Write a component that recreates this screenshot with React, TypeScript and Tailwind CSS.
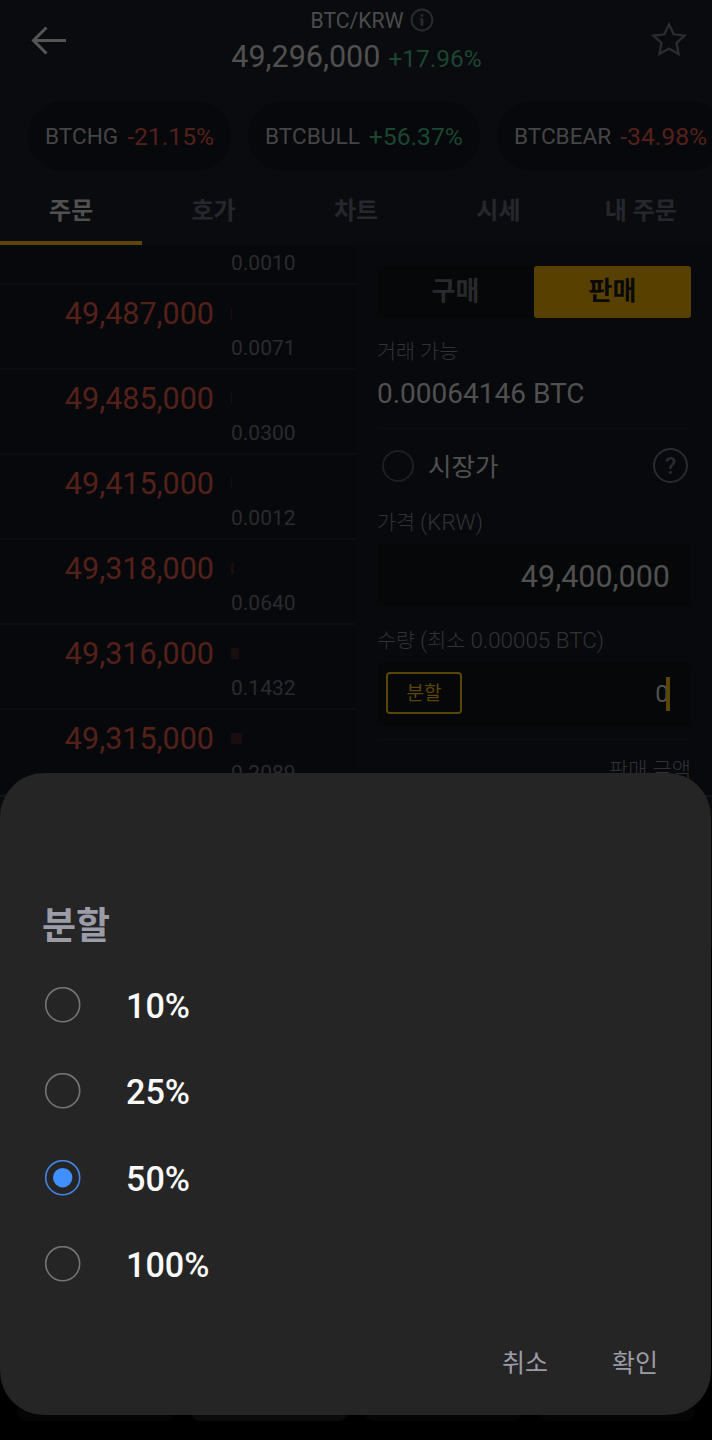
import React, { useState } from "react";

const tickers = [
  { name: "BTCHG", change: "-21.15%", up: false },
  { name: "BTCBULL", change: "+56.37%", up: true },
  { name: "BTCBEAR", change: "-34.98%", up: false },
];

const tabs = ["주문", "호가", "차트", "시세", "내 주문"];

const asks = [
  { price: "49,487,000", amount: "0.0071", bar: 1 },
  { price: "49,485,000", amount: "0.0300", bar: 1 },
  { price: "49,415,000", amount: "0.0012", bar: 1 },
  { price: "49,318,000", amount: "0.0640", bar: 3 },
  { price: "49,316,000", amount: "0.1432", bar: 8 },
  { price: "49,315,000", amount: "0.2089", bar: 11 },
];

const options = ["10%", "25%", "50%", "100%"];

const Header: React.FC = () => (
  <header className="flex h-[101px] shrink-0 items-start justify-between pl-[30px] pr-[25px]">
    <svg className="mt-[25px] h-[32px] w-[37px]" viewBox="0 0 37 32" fill="none" stroke="#555555" strokeWidth="3">
      <path d="M36 15.5H4M16.5 2.5L3.5 15.5L16.5 28.5" />
    </svg>
    <div className="mr-[5px] flex w-[252px] flex-col items-center">
      <div className="flex h-[40px] items-center gap-[7px] pl-[32px]">
        <span className="pt-px text-[21.2px] leading-[40px] text-[#4b4b4d]">BTC/KRW</span>
        <svg className="h-[24px] w-[24px]" viewBox="0 0 24 24" fill="none" stroke="#2a2b2f" strokeWidth="2">
          <circle cx="12" cy="12" r="10.4" />
          <path d="M12 6.2v2.6M12 10.4v7.4" strokeWidth="2.6" />
          <path d="M9.5 11.2h2.5" strokeWidth="1.6" />
        </svg>
      </div>
      <div className="flex h-[32px] items-baseline gap-[8px] whitespace-nowrap leading-[33px]">
        <span className="text-[30.5px] text-[#505050]">49,296,000</span>
        <span className="text-[24.5px] text-[#1b4630]">+17.96%</span>
      </div>
    </div>
    <svg className="mt-[21px] h-[36px] w-[36px]" viewBox="0 0 36 36" fill="none" stroke="#2b2c30" strokeWidth="2.3">
      <path d="M18 3.2L22.6 13.3L33.6 14.6L25.5 22L27.6 33L18 27.6L8.4 33L10.5 22L2.4 14.6L13.4 13.3Z" />
    </svg>
  </header>
);

const OrderBook: React.FC = () => (
  <section className="w-[356px] shrink-0 bg-[#07080b]">
    <div className="flex h-[40px] border-b-2 border-[#0c0d11] pl-[231px]">
      <span className="text-[21px] leading-[37px] text-[#2a2b2f]">0.0010</span>
    </div>
    {asks.map((row) => (
      <div key={row.price} className="flex h-[85px] gap-[17px] border-b-2 border-[#0c0d11]">
        <span className="w-[214px] pt-[9px] text-right text-[30.5px] leading-[40px] text-[#54211a]">
          {row.price}
        </span>
        <div className="flex flex-col">
          <div className="mt-[23px] h-[11px] bg-[#1a0d0d]" style={{ width: row.bar }} />
          <span className="mt-[13px] text-[21px] leading-[32px] text-[#2a2b2f]">{row.amount}</span>
        </div>
      </div>
    ))}
  </section>
);

const OrderForm: React.FC = () => (
  <section className="flex flex-1 flex-col bg-[#08090d] pl-[21px] pr-[21px] pt-[21px]">
    <div className="flex h-[52px] shrink-0 rounded-[3px] bg-[#060708] text-[26px] font-bold leading-[50px]">
      <button className="w-[157px] pb-[2px] text-[#292a2e]">구매</button>
      <button className="flex-1 rounded-[3px] bg-[#584100] pb-[2px] text-[#0a0a0b]">판매</button>
    </div>
    <span className="mt-[18px] text-[20.7px] font-light leading-[32px] text-[#313236]">거래 가능</span>
    <span className="mt-[10px] text-[28px] leading-[32px] text-[#505050]">0.00064146 BTC</span>
    <div className="mt-[18px] h-[1px] shrink-0 bg-[#0d0e12]" />
    <div className="flex h-[73px] shrink-0 items-center pl-[5px] pr-[3px]">
      <span className="h-[32px] w-[32px] rounded-full border-[2px] border-[#1d1e22]" />
      <span className="ml-[14px] flex-1 pt-[2px] text-[25.5px] leading-[72px] text-[#505050]">시장가</span>
      <span className="flex h-[35px] w-[35px] items-center justify-center rounded-full border-[2px] border-[#2a2b2f] pt-px text-[23px] font-medium leading-none text-[#2a2b2f]">
        ?
      </span>
    </div>
    <span className="mt-[4px] h-[32px] text-[20.7px] font-light leading-[32px] text-[#313236]">
      가격 <span className="text-[22.4px]">(KRW)</span>
    </span>
    <div className="mt-[6px] h-[62px] shrink-0 rounded-[3px] bg-[#060708] pr-[21px] text-right text-[30.5px] leading-[66px] text-[#505050]">
      49,400,000
    </div>
    <span className="mt-[18px] h-[32px] text-[20.7px] font-light leading-[32px] text-[#313236]">
      수량 <span className="text-[22.4px]">(</span>최소 <span className="text-[22.4px]">0.00005 BTC)</span>
    </span>
    <div className="mt-[6px] flex h-[64px] shrink-0 items-center justify-between rounded-[3px] bg-[#060708] pl-[9px] pr-[21px]">
      <button className="mb-[2px] h-[42px] w-[76px] rounded-[4px] border-2 border-[#5b4509] text-[19px] leading-[37px] text-[#5b4509]">
        분할
      </button>
      <div className="mb-px flex items-center">
        <span className="pt-px text-[24.5px] leading-[60px] text-[#505050]">0</span>
        <span className="-ml-[3px] h-[34px] w-[4px] bg-[#5b4509]" />
      </div>
    </div>
    <div className="mt-[13px] h-[1px] shrink-0 bg-[#0d0e12]" />
    <span className="mt-[14px] text-right text-[20.9px] font-light leading-[32px] text-[#313236]">판매 금액</span>
  </section>
);

const Radio: React.FC<{ checked: boolean }> = ({ checked }) => (
  <svg className="h-[36px] w-[36px]" viewBox="0 0 36 36" fill="none">
    <circle cx="17.7" cy="17.7" r="17" stroke={checked ? "#4285e0" : "#747474"} strokeWidth="1.6" />
    {checked && <circle cx="17.7" cy="17.7" r="9.7" fill="#4090ff" />}
  </svg>
);

const SplitDialog: React.FC = () => {
  const [selected, setSelected] = useState("50%");

  return (
    <div className="absolute left-0 top-[773px] flex h-[642px] w-[711px] flex-col rounded-[44px] bg-[#252525]" role="dialog">
      <h2 className="mt-[129px] pl-[42px] text-[37px] font-bold leading-[50px] text-[#9b9ca7]">분할</h2>
      <div className="mt-[10px] flex flex-col">
        {options.map((option) => (
          <button
            key={option}
            className="flex h-[86.3px] items-center pl-[45px]"
            onClick={() => setSelected(option)}
          >
            <Radio checked={selected === option} />
            <span className="ml-[45px] pt-[2px] text-[34.2px] font-medium leading-[40px] text-[#fafafa]">{option}</span>
          </button>
        ))}
      </div>
      <div className="mt-[32px] flex justify-end gap-[64px] pr-[53px] text-[25px] leading-[50px] text-[#9b9ca7]">
        <button>취소</button>
        <button>확인</button>
      </div>
    </div>
  );
};

export default function App() {
  return (
    <div className="relative flex h-[1440px] w-[712px] flex-col overflow-hidden bg-[#0a0b0f] font-[Roboto,'Noto_Sans_CJK_KR',sans-serif]">
      <Header />
      <div className="flex h-[70px] shrink-0 gap-[17px] overflow-hidden pl-[28px]">
        {tickers.map((t) => (
          <div
            key={t.name}
            className="flex shrink-0 items-center gap-[9px] rounded-full bg-[#07080b] px-[17px] leading-[70px]"
          >
            <span className="pt-px text-[22.6px] text-[#454547]">{t.name}</span>
            <span className={t.up ? "pt-px text-[24.7px] text-[#1b4630]" : "pt-px text-[24.7px] text-[#54211a]"}>
              {t.change}
            </span>
          </div>
        ))}
      </div>
      <nav className="grid h-[75px] shrink-0 grid-cols-5 border-b border-[#101115] text-[24px] font-bold">
        {tabs.map((tab, i) => (
          <button
            key={tab}
            className={
              i === 0
                ? "border-b-4 border-[#5b4509] pt-[9px] text-[#505050]"
                : "border-b-4 border-transparent pt-[9px] text-[#26272c]"
            }
          >
            {tab}
          </button>
        ))}
      </nav>
      <main className="-mt-px flex h-[550px] shrink-0 overflow-hidden">
        <OrderBook />
        <OrderForm />
      </main>
      <div className="h-[153px] shrink-0 border-t-2 border-[#131418]" />
      <div className="flex flex-1 flex-col bg-black">
        <div className="flex h-[473px] items-end gap-[16px] px-[17px]">
          <span className="h-[60px] flex-1 rounded-[9px] bg-[#050505]" />
          <span className="h-[60px] flex-1 rounded-[9px] bg-[#0a0a0a]" />
          <span className="h-[60px] flex-1 rounded-[9px] bg-[#050505]" />
          <span className="h-[60px] flex-1 rounded-[9px] bg-[#050505]" />
        </div>
      </div>
      <SplitDialog />
    </div>
  );
}
